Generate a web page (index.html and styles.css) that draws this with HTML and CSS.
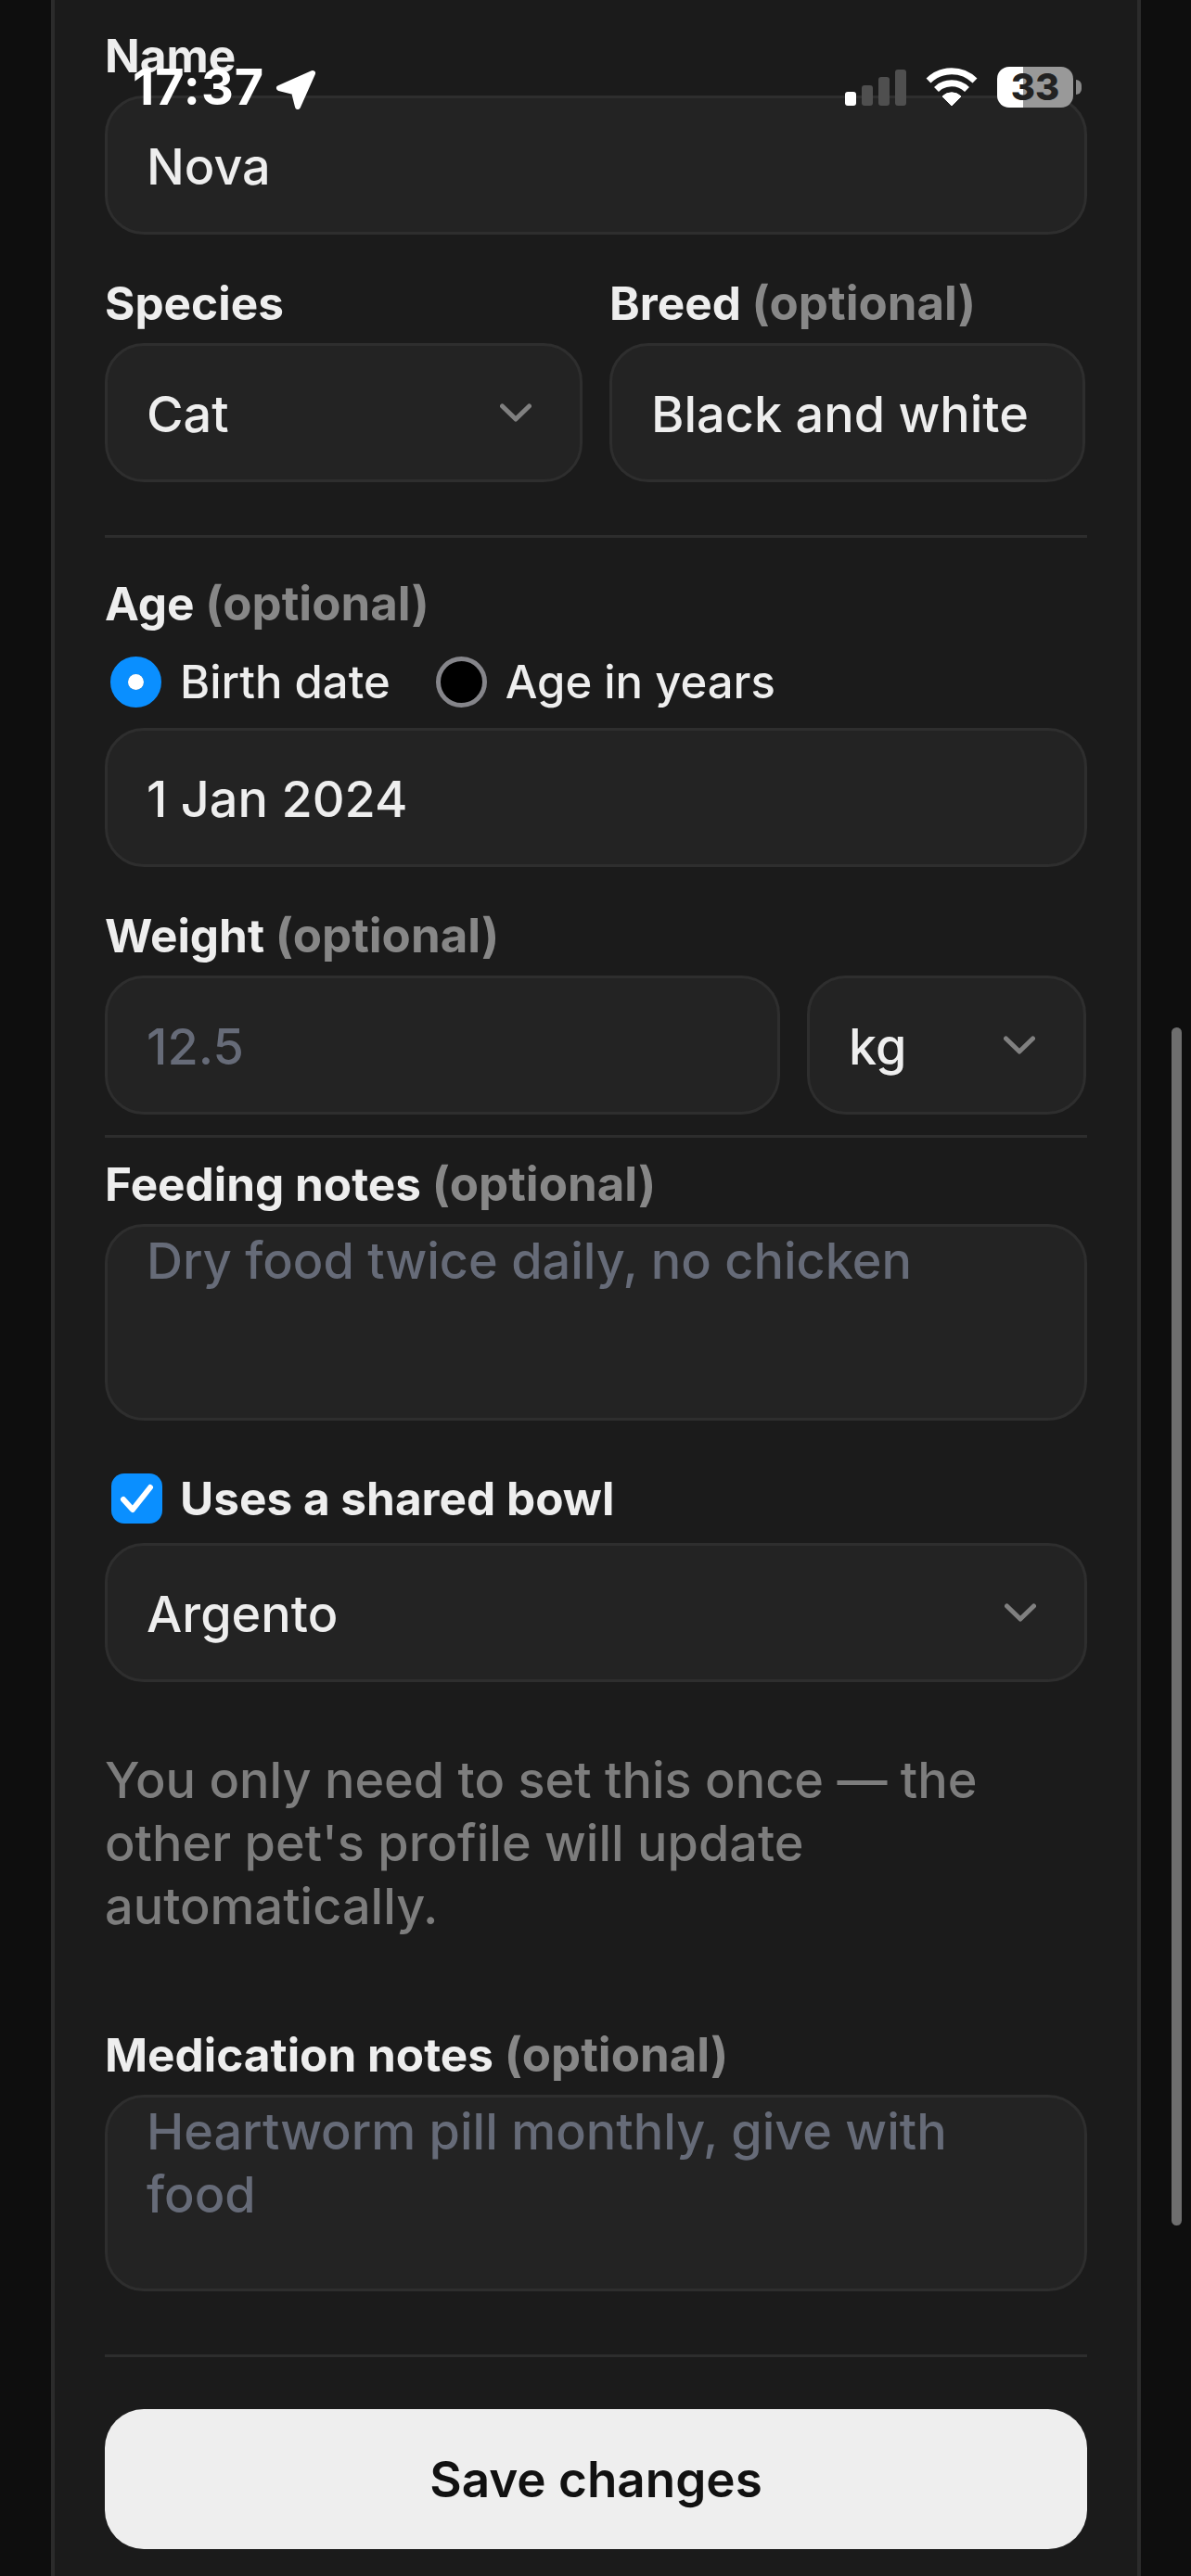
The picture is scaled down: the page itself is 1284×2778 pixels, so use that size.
FILE: index.html
```html
<!DOCTYPE html>
<html lang="en">
<head>
    <meta charset="UTF-8">
    <meta name="viewport" content="width=device-width, initial-scale=1.0">
    <title>Edit pet</title>
    <link rel="stylesheet" href="styles.css">
</head>
<body>
    <div class="status-bar">
        <div class="status-left">
            <span class="time">17:37</span>
            <svg class="location" viewBox="0 0 44 44"><path d="M40 4 L4 20 L20 24 L24 40 Z" fill="#fff" stroke="#fff" stroke-width="6" stroke-linejoin="round"/></svg>
        </div>
        <div class="status-right">
            <div class="signal">
                <span class="bar bar-on bar-1"></span>
                <span class="bar bar-2"></span>
                <span class="bar bar-3"></span>
                <span class="bar bar-4"></span>
            </div>
            <svg class="wifi" viewBox="0 0 56 42">
                <path d="M28 41 L18 31 A14 14 0 0 1 38 31 Z" fill="#fff" stroke="#fff" stroke-width="1" stroke-linejoin="round"/>
                <path d="M11.5 23.5 A23.5 23.5 0 0 1 44.5 23.5" fill="none" stroke="#fff" stroke-width="7"/>
                <path d="M3 14 A35.5 35.5 0 0 1 53 14" fill="none" stroke="#fff" stroke-width="7"/>
            </svg>
            <div class="battery">
                <div class="battery-body"><span class="battery-level">33</span></div>
                <span class="battery-nub"></span>
            </div>
        </div>
    </div>

    <div class="panel">
        <div class="label">Name</div>
        <div class="field">Nova</div>

        <div class="two-col">
            <div>
                <div class="label">Species</div>
                <div class="field field-select">Cat
                    <svg class="chevron" viewBox="0 0 34 20"><path d="M2.5 3 L17 17 L31.5 3"/></svg>
                </div>
            </div>
            <div>
                <div class="label">Breed <span class="optional">(optional)</span></div>
                <div class="field">Black and white</div>
            </div>
        </div>

        <hr class="divider divider-first">

        <div class="label">Age <span class="optional">(optional)</span></div>
        <div class="radio-row">
            <span class="radio radio-on"></span>
            <span class="radio-text">Birth date</span>
            <span class="radio"></span>
            <span class="radio-text">Age in years</span>
        </div>
        <div class="field">1 Jan 2024</div>

        <div class="label label-gap">Weight <span class="optional">(optional)</span></div>
        <div class="weight-row">
            <div class="field placeholder">12.5</div>
            <div class="field field-select">kg
                <svg class="chevron" viewBox="0 0 34 20"><path d="M2.5 3 L17 17 L31.5 3"/></svg>
            </div>
        </div>

        <hr class="divider divider-tight">

        <div class="label">Feeding notes <span class="optional">(optional)</span></div>
        <div class="field field-area placeholder">Dry food twice daily, no chicken</div>

        <div class="check-row">
            <span class="checkbox">
                <svg viewBox="0 0 55 54"><path d="M13 28 L23 39 L42 15"/></svg>
            </span>
            <span class="label check-text">Uses a shared bowl</span>
        </div>
        <div class="field field-select">Argento
            <svg class="chevron" viewBox="0 0 34 20"><path d="M2.5 3 L17 17 L31.5 3"/></svg>
        </div>

        <p class="help">You only need to set this once — the other pet's profile will update automatically.</p>

        <div class="label">Medication notes <span class="optional">(optional)</span></div>
        <div class="field field-area placeholder">Heartworm pill monthly, give with food</div>

        <hr class="divider divider-last">

        <button class="save-btn">Save changes</button>
    </div>

    <div class="scroll-thumb"></div>
</body>
</html>
```

FILE: styles.css
```css
html, body {
    height: 100%;
}

body {
    margin: 0;
    background-color: #0e0e0e;
    font-family: Inter, "Noto Sans", sans-serif;
    color: #eeeeee;
    overflow: hidden;
}

.panel {
    box-sizing: border-box;
    width: 1175px;
    height: 2778px;
    margin-left: 55px;
    padding: 33px 54px 0;
    background-color: #1b1b1b;
    border-left: 4px solid #2b2b2b;
    border-right: 4px solid #2b2b2b;
}

.label {
    height: 54px;
    line-height: 54px;
    margin-bottom: 16px;
    font-size: 49.5px;
    font-weight: 700;
    color: #eeeeee;
    white-space: nowrap;
}

.label-gap {
    margin-top: 47px;
}

.optional {
    font-size: 51px;
    color: #878787;
}

.field {
    box-sizing: border-box;
    display: flex;
    align-items: center;
    justify-content: space-between;
    height: 150px;
    padding: 3px 42px 0;
    background-color: #232323;
    border: 3px solid #2e2e2e;
    border-radius: 42px;
    font-size: 54px;
    font-weight: 500;
    color: #eeeeee;
    white-space: nowrap;
}

.field-area {
    display: block;
    height: 212px;
    padding-top: 3px;
    line-height: 68px;
    white-space: normal;
}

.placeholder {
    color: #666b78;
}

.chevron {
    width: 34px;
    height: 20px;
    margin-top: -3px;
    margin-right: 10px;
}

.chevron path {
    fill: none;
    stroke: #808080;
    stroke-width: 5;
    stroke-linecap: round;
    stroke-linejoin: round;
}

.two-col {
    display: grid;
    grid-template-columns: 515px 513px;
    gap: 29px;
    margin-top: 47px;
}

.weight-row {
    display: grid;
    grid-template-columns: 728px 301px;
    gap: 29px;
}

.divider {
    height: 3px;
    margin: 0;
    border: none;
    background-color: #2d2d2d;
}

.divider-first {
    margin-top: 57px;
    margin-bottom: 44px;
}

.divider-tight {
    margin-top: 22px;
    margin-bottom: 23px;
}

.divider-last {
    margin-top: 68px;
    margin-bottom: 56px;
}

.radio-row {
    display: flex;
    align-items: center;
    height: 55px;
    margin-top: 30px;
    margin-bottom: 22px;
    padding-left: 6px;
    font-size: 49px;
    font-weight: 500;
}

.radio {
    box-sizing: border-box;
    flex: none;
    width: 55px;
    height: 55px;
    background-color: #000;
    border: 5px solid #85858a;
    border-radius: 50%;
}

.radio-on {
    background-color: #0a8fff;
    border: 19px solid #0a8fff;
    background-clip: padding-box;
}

.radio-on::after {
    content: "";
    display: block;
    width: 17px;
    height: 17px;
    background-color: #fff;
    border-radius: 50%;
}

.radio-text {
    margin-left: 20px;
    margin-right: 49px;
}

.check-row {
    display: flex;
    align-items: center;
    height: 55px;
    margin-top: 56px;
    margin-bottom: 21px;
    padding-left: 7px;
}

.checkbox {
    flex: none;
    width: 55px;
    height: 54px;
    background-color: #0a8fff;
    border-radius: 14px;
}

.checkbox svg {
    display: block;
    width: 55px;
    height: 54px;
}

.checkbox path {
    fill: none;
    stroke: #fff;
    stroke-width: 6;
    stroke-linecap: round;
    stroke-linejoin: round;
}

.check-text {
    margin-bottom: 0;
    margin-left: 19px;
}

.help {
    margin: 72px 0 99px;
    font-size: 54px;
    font-weight: 500;
    line-height: 68px;
    color: #7d7d7d;
}

.save-btn {
    display: block;
    width: 100%;
    height: 151px;
    border: none;
    border-radius: 42px;
    background-color: #eeeeee;
    color: #111111;
    font-family: inherit;
    font-size: 53px;
    font-weight: 600;
}

.status-bar {
    position: absolute;
    top: 0;
    left: 0;
    width: 100%;
    height: 130px;
}

.status-left {
    position: absolute;
    top: 68px;
    left: 143px;
    display: flex;
    align-items: center;
    gap: 12px;
}

.time {
    font-size: 54px;
    font-weight: 700;
    line-height: 52px;
    color: #fff;
    letter-spacing: 1px;
}

.location {
    width: 44px;
    height: 44px;
    margin-top: 6px;
}

.status-right {
    position: absolute;
    top: 72px;
    left: 911px;
    display: flex;
    align-items: center;
    height: 44px;
}

.signal {
    display: flex;
    align-items: flex-end;
    gap: 6px;
    height: 40px;
    margin-right: 21px;
}

.bar {
    width: 12px;
    border-radius: 3px;
    background-color: #4f4f4f;
}

.bar-on {
    background-color: #fff;
}

.bar-1 { height: 15px; }
.bar-2 { height: 22px; }
.bar-3 { height: 31px; }
.bar-4 { height: 39px; }

.wifi {
    width: 56px;
    height: 42px;
    margin-right: 21px;
}

.battery {
    display: flex;
    align-items: center;
    gap: 3px;
}

.battery-body {
    width: 82px;
    height: 44px;
    border-radius: 13px;
    background: linear-gradient(to right, #fff 34%, #999 34%);
    text-align: center;
}

.battery-level {
    font-size: 40px;
    font-weight: 800;
    line-height: 44px;
    color: #222;
}

.battery-nub {
    width: 6px;
    height: 16px;
    border-radius: 0 8px 8px 0;
    background-color: #888;
}

.scroll-thumb {
    position: absolute;
    top: 1108px;
    left: 1263px;
    width: 11px;
    height: 1292px;
    border-radius: 6px;
    background-color: #6e6e6e;
}
```
